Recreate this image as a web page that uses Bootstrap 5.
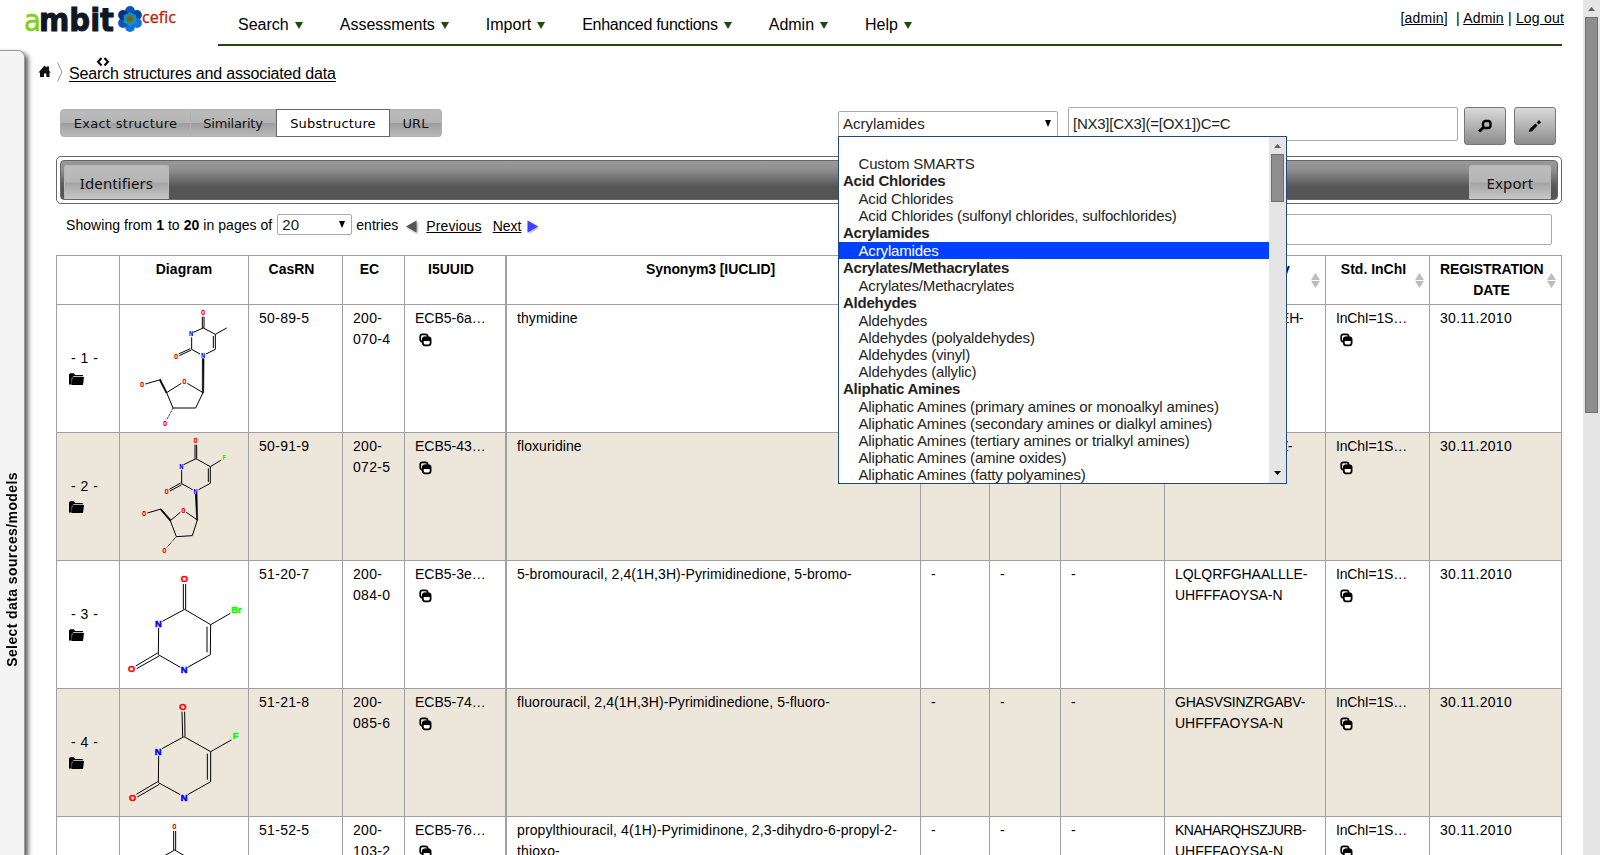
<!DOCTYPE html>
<html lang="en">
<head>
<meta charset="utf-8">
<title>Ambit - Search structures and associated data</title>
<link href="https://cdn.jsdelivr.net/npm/bootstrap@5.3.0/dist/css/bootstrap.min.css" rel="stylesheet">
<style>
body{height:855px;overflow:hidden;background:#fff;color:#000;font:14px/21px "Liberation Sans",Arial,sans-serif;position:relative}
a{color:#000}
.page{margin-left:56px;width:1510px;padding-right:4px;height:855px;overflow:hidden}
.top-head{height:46px}
.brand{width:162px;height:46px}
.menu-line{border-bottom:2px solid #1f4a0c;height:46px;width:1344px}
.menu-line .nav-link{color:#000;font-size:16px;line-height:20px;padding:15px 0 0;display:flex;align-items:center;gap:6px}
.menu-line .nav-link::after{content:"";border:4px solid transparent;border-top:7px solid #1f4a0c;border-bottom:0}
.menu-line .wide{letter-spacing:-.28px}
.menu-line .nav{gap:37px;padding-left:20px}
.user-links{margin-top:8px;margin-right:-2px;white-space:pre;letter-spacing:.2px}
.crumbs{height:61px;padding-top:17px;position:relative}
.crumbs a{font-size:16px;line-height:22px;letter-spacing:-.17px;margin-left:13px;text-decoration-thickness:1px;text-underline-offset:2px}
.look-row{height:49px}
.kinds{height:28px;margin:2px 0 0 4px;font:13px/26px "DejaVu Sans",sans-serif}
.kinds a{color:#111;padding-top:1px;height:28px;text-decoration:none;text-align:center;border:1px solid #b0b0b0;border-left-width:0;background:linear-gradient(#bcbcbc,#b4b4b4 49%,#9e9e9e 51%,#b8b8b8)}
.kinds a:first-child{border-radius:4px 0 0 4px;border-left-width:1px;letter-spacing:.3px}
.kinds a:nth-child(2){letter-spacing:-.2px}
.kinds a:last-child{border-radius:0 4px 4px 0}
.kinds a.on{background:#fff;border:1px solid #666;color:#000;letter-spacing:.15px}
.box{border:1px solid #a9a9a9;border-radius:2px;background:#fff;color:#222;font-size:15px}
.smarts{letter-spacing:-.25px;padding-bottom:2px}
.down{width:0;height:0;border:3.5px solid transparent;border-top:7px solid #000;border-bottom:0}
.sq{width:42px;height:38px;border:1px solid #777;border-radius:3px;background:linear-gradient(#dadada,#8c8c8c)}
.bar-out{height:48px;border:1px solid #666;border-radius:5px;padding:3px}
.bar-in{height:40px;border:1px solid #666;border-radius:4px;background:linear-gradient(#999,#909090 22%,#555 68%,#555);padding:4px 6px 0 3px}
.tabb{height:34px;font:15px/34px "Noto Sans",sans-serif;letter-spacing:.1px;color:#111;text-align:center;border:1px solid #b8b8b8;border-bottom:0;border-radius:3px 3px 0 0;background:linear-gradient(#bdbdbd,#b5b5b5 49%,#a3a3a3 51%,#c8c8c8)}
.paging{height:51px;padding:10px 0 0 10px}
.grid{table-layout:fixed;width:1506px;border-collapse:separate;border-spacing:0;border-left:1px solid #a0a0a0;border-top:1px solid #a0a0a0}
.grid td,.grid th{border-right:1px solid #a0a0a0;border-bottom:1px solid #a0a0a0;padding:3px 0 0 10px;vertical-align:top;white-space:nowrap;overflow:hidden}
.grid th{height:49px;text-align:center;padding:3px 18px 0 10px;position:relative}
.grid th.dg{padding:3px 0 0;letter-spacing:.1px}
.grid th.kk{letter-spacing:.1px;padding-right:14px}
.grid td{height:128px}
.grid td:nth-child(3),.grid td:nth-child(4),.grid td:nth-child(12){letter-spacing:.3px}
.grid td:nth-child(6){letter-spacing:.08px}
.grid td:nth-child(10){letter-spacing:-.25px}
.grid td.full{letter-spacing:-.05px}
.grid td.tight{letter-spacing:-.5px}
.grid td:nth-child(11){letter-spacing:-.2px}
.grid td.ix{vertical-align:middle;padding:0 0 0 12px}
.grid td.ix i{font-style:normal;letter-spacing:.5px;padding-left:2px}
.grid td.dg{padding:0}
.grid td.dg svg{display:block}
.grid tr>:nth-child(5){border-right-width:2px}
.grid tbody tr:nth-child(even){background:#ede6da}
.sorter{position:absolute;right:5px;top:17px}
.copy{display:block;margin:4px 0 0 4px}
.pop{position:absolute;left:838px;top:136px;width:449px;height:348px;border:1px solid #1f4a80;background:#fff;color:#222;font-size:15px;letter-spacing:-.155px;overflow:hidden;white-space:nowrap}
.pop li{height:17px;line-height:17px;padding-left:19.500px}
.pop li.hd{height:18px;font-weight:700;padding-left:4px;letter-spacing:-.25px}
.pop li.sel{background:#0040ff;color:#fff}
.rail{background:#e5e5e5}
.thumb{background:#8e8e8e;border:1px solid #707070}
.side{position:absolute;left:-5px;top:50px;width:30px;height:805px;background:#f4f4f4;border:1px solid #999;border-bottom:0;border-radius:0 7px 0 0;box-shadow:3px 3px 5px #555}
.side span{position:absolute;left:8px;bottom:188px;writing-mode:vertical-rl;transform:rotate(180deg);font:bold 14px/16px "Liberation Sans",Arial,sans-serif;letter-spacing:.4px;white-space:nowrap}
.m{stroke:#000;stroke-width:3;fill:none}
.t{font-family:"DejaVu Sans Mono",monospace;font-weight:700;font-size:21px;text-anchor:middle}
.u{font-family:"Liberation Sans",sans-serif;font-weight:700;font-size:28px;text-anchor:middle;stroke-width:1.5}
g.u[fill="#f00"]{stroke:#f00}
g.u[fill="#00f"]{stroke:#00f}
text.u{stroke:#0f0}
</style>
</head>
<body>
<svg class="d-none">
<symbol id="copy" viewBox="0 0 13 14"><rect x="1.200" y="1.300" width="7.400" height="7.400" rx="2.200" fill="none" stroke="#000" stroke-width="1.700"/><rect x="3.800" y="4.500" width="7.800" height="7.800" rx="2.200" fill="#fff" stroke="#000" stroke-width="1.800"/><path d="M3.500 8V5.500l1.500-1.700h5.500l1.500 1.700V8z"/></symbol>
<symbol id="folder" viewBox="0 0 15 13"><path d="M0 11.500V1.500L1 .3h4L6 2h8v1.200H4.500L2.700 5v6.500z"/><path d="M3.500 4H15l-1 8H2.500z"/></symbol>
<symbol id="sort" viewBox="0 0 9 15"><path d="M4.500 0L9 7H0zM0 8h9l-4.500 7z" fill="#bdbdbd"/></symbol>
</svg>

<div class="page">
<header class="top-head d-flex">
<div class="brand flex-shrink-0"></div>
<div class="menu-line d-flex justify-content-between">
<ul class="nav">
<li><a class="nav-link" href="#">Search</a></li>
<li><a class="nav-link" href="#">Assessments</a></li>
<li><a class="nav-link" href="#">Import</a></li>
<li><a class="nav-link wide" href="#">Enhanced functions</a></li>
<li><a class="nav-link" href="#">Admin</a></li>
<li><a class="nav-link" href="#">Help</a></li>
</ul>
<div class="user-links">[<a href="#">admin</a>]  | <a href="#">Admin</a> | <a href="#">Log out</a></div>
</div>
</header>

<div class="crumbs d-flex align-items-start">
<a href="#">Search structures and associated data</a>
</div>

<div class="look-row d-flex align-items-start">
<nav class="kinds d-flex">
<a href="#" style="width:131px">Exact structure</a><a href="#" style="width:85px">Similarity</a><a href="#" class="on" style="width:114px">Substructure</a><a href="#" style="width:52px">URL</a>
</nav>
<div class="box d-flex align-items-center justify-content-between ms-auto" style="width:220px;height:28px;margin:4px 10px 0 0;padding:0 6px 3px 4px">Acrylamides<span class="down"></span></div>
<div class="box smarts d-flex align-items-center ps-1" style="width:390px;height:34px;margin-right:6px">[NX3][CX3](=[OX1])C=C</div>
<div class="sq d-flex align-items-center justify-content-center me-2"><svg width="14" height="14" viewBox="0 0 14 14" fill="none" stroke="#000"><rect x="5" y="2" width="7.500" height="7" rx="2.500" stroke-width="2.400"/><path d="M5.500 8.500L1 12.500" stroke-width="3"/></svg></div>
<div class="sq d-flex align-items-center justify-content-center" style="margin-right:6px"><svg width="14" height="14" viewBox="0 0 14 14"><path d="M1 13l.6-3L7.500 4.500l2 2L4 12.200zM8.800 3.500L11 1l2 2.200L10.800 5.500z"/></svg></div>
</div>

<div class="bar-out"><div class="bar-in d-flex justify-content-between"><div class="tabb" style="width:105px">Identifiers</div><div class="tabb" style="width:82px">Export</div></div></div>

<div class="paging d-flex align-items-start">
<span style="line-height:16px;margin-top:3px;letter-spacing:.05px">Showing from <b>1</b> to <b>20</b> in pages of</span>
<div class="box d-flex align-items-center justify-content-between" style="width:75px;height:21px;margin-left:5px;padding:0 6px 0 4px">20<span class="down"></span></div>
<span class="ms-1" style="margin-top:1px">entries</span>
<svg style="margin:6px 0 0 7px" width="14" height="15"><path d="M1 6.500L11.500 .500v12z" fill="#555" style="filter:drop-shadow(1px 1px 1px #999)"/></svg>
<a href="#" style="margin:2px 0 0 7px;letter-spacing:.1px">Previous</a><a href="#" style="margin:2px 0 0 11px">Next</a>
<svg style="margin:6px 0 0 6px" width="14" height="15"><path d="M11 6.500L.500 .500v12z" fill="#3f3fff" style="filter:drop-shadow(1px 1px 1px #999)"/></svg>
<div class="box ms-auto" style="width:400px;height:31px;margin-right:10px"></div>
</div>

<table class="grid">
<colgroup><col style="width:63px"><col style="width:129px"><col style="width:94px"><col style="width:62px"><col style="width:102px"><col style="width:414px"><col style="width:69px"><col style="width:71px"><col style="width:104px"><col style="width:161px"><col style="width:104px"><col style="width:132px"></colgroup>
<thead><tr><th></th><th class="dg">Diagram</th><th>CasRN</th><th>EC</th><th>I5UUID</th><th style="letter-spacing:-.1px;padding-right:16px">Synonym3 [IUCLID]</th><th></th><th></th><th></th><th class="kk">Std. InChI key<svg class="sorter" width="9" height="15"><use href="#sort"/></svg></th><th>Std. InChI<svg class="sorter" width="9" height="15"><use href="#sort"/></svg></th><th style="letter-spacing:-.1px">REGISTRATION<br>DATE<svg class="sorter" width="9" height="15"><use href="#sort"/></svg></th></tr></thead>
<tbody>
<tr><td class="ix"><i>- 1 -</i><br><svg width="15" height="13"><use href="#folder"/></svg></td>
<td class="dg"><svg width="128" height="127" viewBox="210 15 384 381"><path class="m" d="M457 50V84M462 50V84M460 84L430 97M460 84L496 103L530 84M496 103V148M490 108V144M496 148L468 162M425 112V148L450 162M421 146L386 162M424 150L388 167M350 278L394 250M412 250L459 278L437 324H369L350 278M286 252L328 240"/><path d="M457 176h5l-1 102-4 0zM328 240l3-3 20 40-3 2z" stroke="#000" stroke-width="2"/><path class="m" stroke-dasharray="3 2" d="M369 324L351 358"/><g class="t" fill="#f00"><text x="459" y="45">O</text><text x="378" y="177">O</text><text x="403" y="251">O</text><text x="276" y="262">O</text><text x="345" y="377">O</text></g><g class="t" fill="#00f"><text x="423" y="109">N</text><text x="459" y="174">N</text></g></svg></td>
<td>50-89-5</td><td>200-<br>070-4</td><td>ECB5-6a…<br><svg class="copy" width="13" height="14"><use href="#copy"/></svg></td><td>thymidine</td><td></td><td></td><td></td><td>IQFYYKKMVGJFEH-<br>XLPZGREQSA-N</td><td>InChI=1S…<br><svg class="copy" width="13" height="14"><use href="#copy"/></svg></td><td>30.11.2010</td></tr>
<tr><td class="ix"><i>- 2 -</i><br><svg width="15" height="13"><use href="#folder"/></svg></td>
<td class="dg"><svg width="128" height="127" viewBox="210 399 384 381"><path class="m" d="M435 434V476M440 434V476M438 476L401 494M438 476L481 500L514 480M481 500V550M475 505V546M481 550L446 569M395 509V551L428 569M392 549L358 568M395 554L360 573M361 662L391 637M409 637L442 660L427 707L379 710L361 662M292 639L330 628"/><path d="M436 582h5l2 78h-3zM330 628l3-2 30 34-3 3z" stroke="#000" stroke-width="2"/><path class="m" stroke-dasharray="3 2" d="M379 710L350 743"/><g class="t" fill="#f00"><text x="437" y="429">O</text><text x="350" y="582">O</text><text x="400" y="638">O</text><text x="282" y="649">O</text><text x="343" y="760">O</text></g><g class="t" fill="#00f"><text x="394" y="507">N</text><text x="437" y="581">N</text></g><text class="t" fill="#1e1" x="523" y="479">F</text></svg></td>
<td>50-91-9</td><td>200-<br>072-5</td><td>ECB5-43…<br><svg class="copy" width="13" height="14"><use href="#copy"/></svg></td><td>floxuridine</td><td></td><td></td><td></td><td class="tight">ODKNJVUHOIMIIZ-<br>RRKCRQDMSA-N</td><td>InChI=1S…<br><svg class="copy" width="13" height="14"><use href="#copy"/></svg></td><td>30.11.2010</td></tr>
<tr><td class="ix"><i>- 3 -</i><br><svg width="15" height="13"><use href="#folder"/></svg></td>
<td class="dg"><svg width="128" height="127" viewBox="210 33 384 381"><path class="m" d="M400 102V178M407 102V178M404 178L337 214M404 178L482 224L541 190M482 224L481 314L413 352M471 230V307M326 233L325 314L391 352M323 309L257 348M327 318L260 356"/><g class="u" fill="#f00"><text x="403" y="97">O</text><text x="245" y="367">O</text></g><g class="u" fill="#00f"><text x="325" y="232">N</text><text x="402" y="368">N</text></g><text class="u" fill="#0f0" x="559" y="188">Br</text></svg></td>
<td>51-20-7</td><td>200-<br>084-0</td><td>ECB5-3e…<br><svg class="copy" width="13" height="14"><use href="#copy"/></svg></td><td>5-bromouracil, 2,4(1H,3H)-Pyrimidinedione, 5-bromo-</td><td>-</td><td>-</td><td>-</td><td class="full">LQLQRFGHAALLLE-<br>UHFFFAOYSA-N</td><td>InChI=1S…<br><svg class="copy" width="13" height="14"><use href="#copy"/></svg></td><td>30.11.2010</td></tr>
<tr><td class="ix"><i>- 4 -</i><br><svg width="15" height="13"><use href="#folder"/></svg></td>
<td class="dg"><svg width="128" height="127" viewBox="210 417 384 381"><path class="m" d="M396 485L398 560M404 485L405 560M402 560L336 596M402 560L482 605L544 570M482 605V695L413 734M472 611V689M326 617L325 698L391 734M323 695L259 733M328 703L262 741"/><g class="u" fill="#f00"><text x="399" y="479">O</text><text x="248" y="754">O</text></g><g class="u" fill="#00f"><text x="324" y="616">N</text><text x="402" y="752">N</text></g><text class="u" fill="#0f0" x="557" y="568">F</text></svg></td>
<td>51-21-8</td><td>200-<br>085-6</td><td>ECB5-74…<br><svg class="copy" width="13" height="14"><use href="#copy"/></svg></td><td>fluorouracil, 2,4(1H,3H)-Pyrimidinedione, 5-fluoro-</td><td>-</td><td>-</td><td>-</td><td>GHASVSINZRGABV-<br><span style="letter-spacing:0">UHFFFAOYSA-N</span></td><td>InChI=1S…<br><svg class="copy" width="13" height="14"><use href="#copy"/></svg></td><td>30.11.2010</td></tr>
<tr><td class="ix"></td>
<td class="dg"><svg width="128" height="127" viewBox="210 801 384 381"><path class="m" d="M371 843V900M377 843V900M374 900L330 925M374 900L420 927"/><text class="t" fill="#f00" x="373" y="836">O</text></svg></td>
<td>51-52-5</td><td>200-<br>103-2</td><td>ECB5-76…<br><svg class="copy" width="13" height="14"><use href="#copy"/></svg></td><td style="letter-spacing:.12px">propylthiouracil, 4(1H)-Pyrimidinone, 2,3-dihydro-6-propyl-2-<br>thioxo-</td><td>-</td><td>-</td><td>-</td><td class="tight">KNAHARQHSZJURB-<br><span style="letter-spacing:0">UHFFFAOYSA-N</span></td><td>InChI=1S…<br><svg class="copy" width="13" height="14"><use href="#copy"/></svg></td><td>30.11.2010</td></tr>
</tbody>
</table>
</div>

<!-- logo and breadcrumb marks hang over the left page margin -->
<svg class="position-absolute top-0 start-0" width="200" height="46">
<text x="24" y="31" font-family="DejaVu Sans" font-size="31" fill="#7fd21a" stroke="#7fd21a" stroke-width=".6" textLength="17" lengthAdjust="spacingAndGlyphs">a</text>
<text x="39" y="31" font-family="DejaVu Sans" font-weight="700" font-size="32" fill="#0d1726" stroke="#0d1726" stroke-width="1" textLength="75" lengthAdjust="spacingAndGlyphs">mbit</text>
<g transform="translate(130 19)"><g fill="#0b56bd"><circle cy="-8" r="4.900"/><circle cx="7" cy="-4" r="4.900" fill="#0a47ab"/><circle cx="7" cy="4" r="4.900" fill="#1173dc"/><circle cy="8" r="4.900" fill="#1173dc"/><circle cx="-7" cy="4" r="4.900"/><circle cx="-7" cy="-4" r="4.900" fill="#082f8c"/></g><g fill="#1f8fae"><circle r="5"/><circle cy="-4" r="2.800"/><circle cx="3.500" cy="-2" r="2.800"/><circle cx="3.500" cy="2" r="2.800"/><circle cy="4" r="2.800"/><circle cx="-3.500" cy="2" r="2.800"/><circle cx="-3.500" cy="-2" r="2.800"/></g><circle r="3.700" fill="#2f8a3c"/><circle r="1.700" fill="#e02a10"/></g>
<text x="142" y="22.500" font-family="Open Sans" font-size="15.500" fill="#b52508" stroke="#b52508" stroke-width=".3" textLength="34" lengthAdjust="spacingAndGlyphs">cefic</text>
</svg>
<svg class="position-absolute" style="left:38px;top:62px" width="28" height="20" viewBox="0 0 28 20"><path fill="#111" d="M.5 10.500L6.500 3.500l2 2V4.500h2.500v4L12.800 10.500H11.500v4.500H8.300V11.500H6v3.500H2V10.500z"/><path d="M19.500 0.500L24 10L19.500 19.500" fill="none" stroke="#999"/></svg>

<!-- open list of the SMARTS select -->
<div class="pop d-flex">
<ul class="list-unstyled mb-0 flex-grow-1">
<li class="hd"></li><li>Custom SMARTS</li>
<li class="hd">Acid Chlorides</li><li>Acid Chlorides</li><li>Acid Chlorides (sulfonyl chlorides, sulfochlorides)</li>
<li class="hd">Acrylamides</li><li class="sel">Acrylamides</li>
<li class="hd">Acrylates/Methacrylates</li><li>Acrylates/Methacrylates</li>
<li class="hd">Aldehydes</li><li>Aldehydes</li><li>Aldehydes (polyaldehydes)</li><li>Aldehydes (vinyl)</li><li>Aldehydes (allylic)</li>
<li class="hd">Aliphatic Amines</li><li>Aliphatic Amines (primary amines or monoalkyl amines)</li><li>Aliphatic Amines (secondary amines or dialkyl amines)</li><li>Aliphatic Amines (tertiary amines or trialkyl amines)</li><li>Aliphatic Amines (amine oxides)</li><li>Aliphatic Amines (fatty polyamines)</li>
</ul>
<div class="rail d-flex flex-column align-items-center" style="width:17px">
<svg width="7" height="4" style="margin:7px 0 6px" class="flex-shrink-0"><path d="M0 4L3.500 0L7 4z" fill="#606060"/></svg>
<div class="thumb" style="width:13px;height:48px"></div>
<svg width="7" height="4" class="mt-auto mb-2"><path d="M0 0h7L3.500 4z"/></svg>
</div>
</div>

<aside class="side"><span>Select data sources/models</span></aside>
<svg class="position-absolute" style="left:96px;top:57px" width="14" height="10" viewBox="0 0 14 10"><path d="M5.500 1L2 4.800L5.500 8.500M8.500 1L12 4.800L8.500 8.500" fill="none" stroke="#000" stroke-width="2"/></svg>
<div class="rail position-absolute top-0 end-0 h-100 d-flex flex-column align-items-center" style="width:17px">
<svg width="7" height="4" style="margin:7px 0 6px" class="flex-shrink-0"><path d="M0 4L3.500 0L7 4z" fill="#606060"/></svg>
<div class="thumb" style="width:13px;height:396px"></div>
</div>
<script src="https://cdn.jsdelivr.net/npm/bootstrap@5.3.0/dist/js/bootstrap.bundle.min.js"></script>
</body>
</html>
